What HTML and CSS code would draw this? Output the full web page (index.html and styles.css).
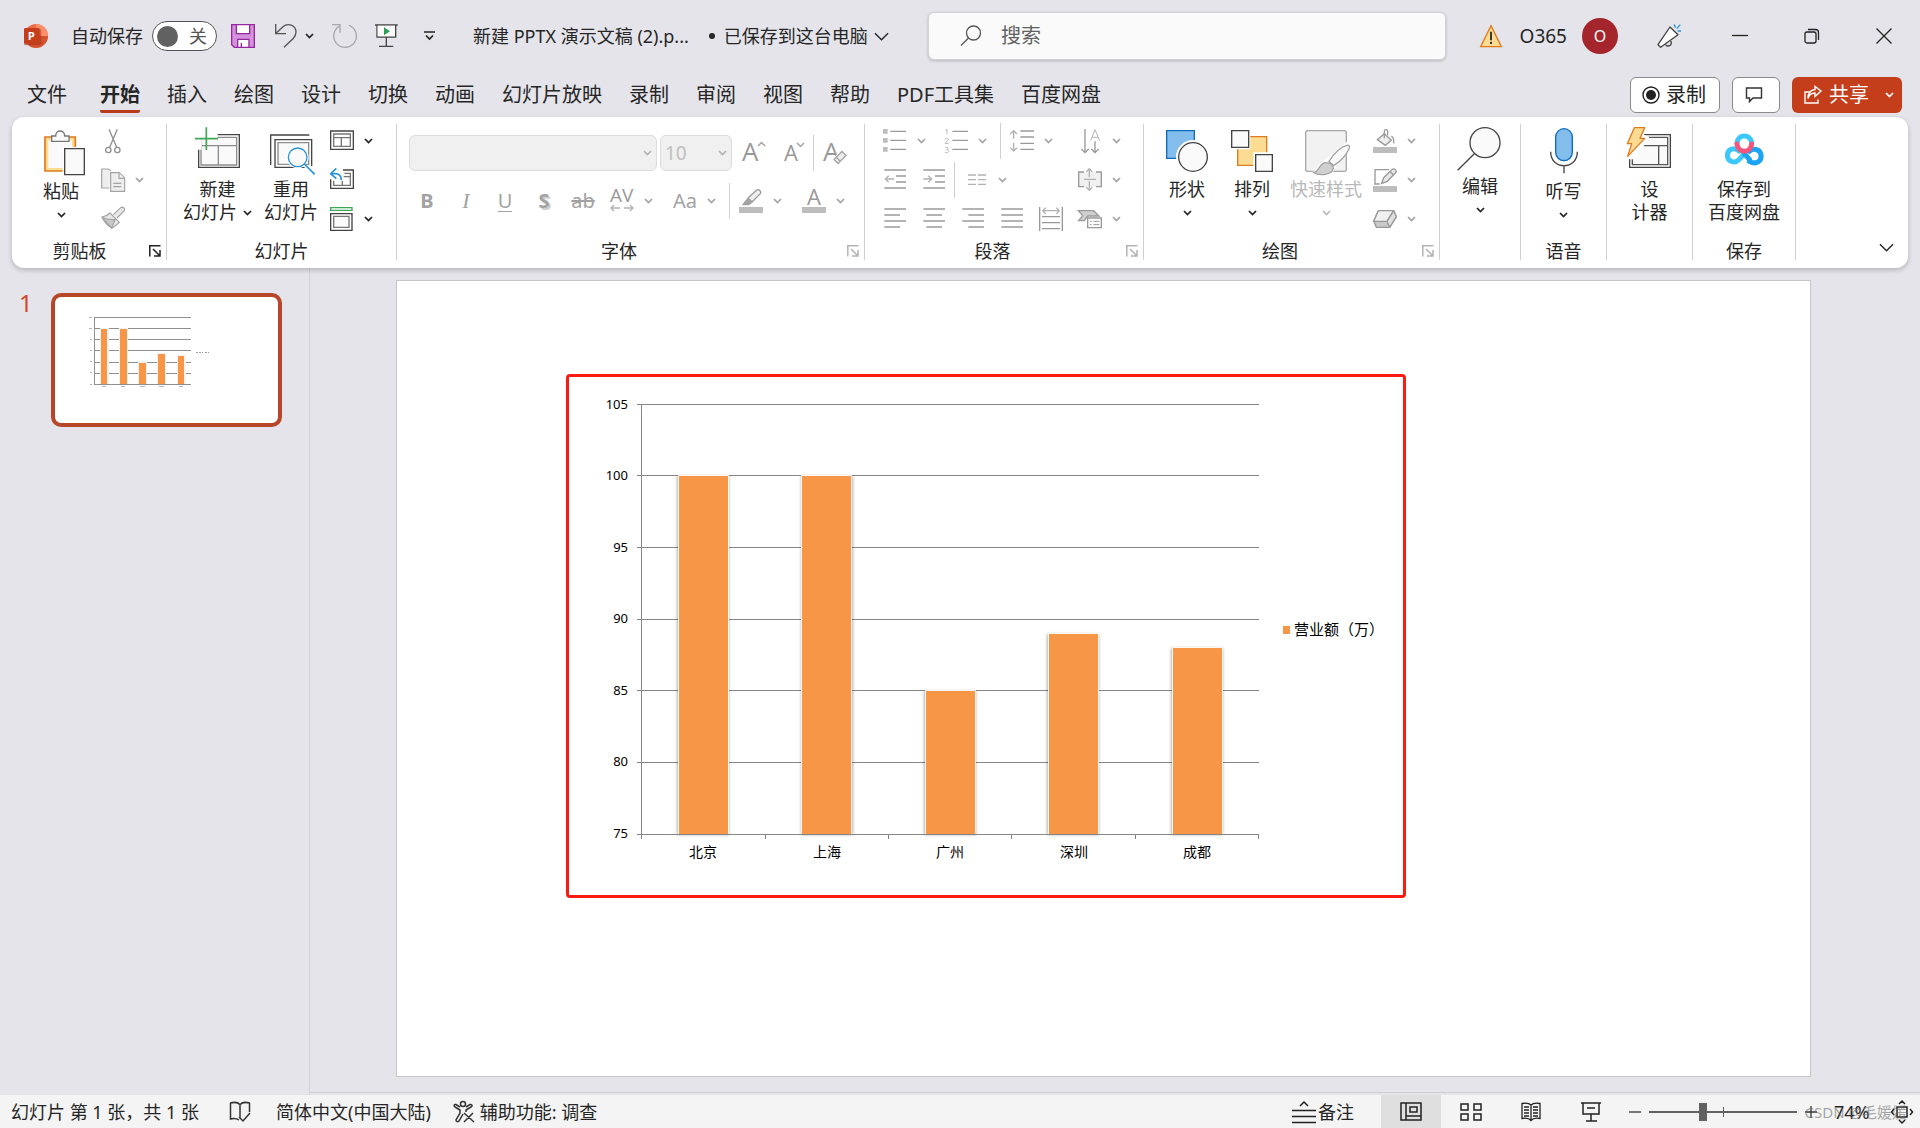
FILE: index.html
```html
<!DOCTYPE html>
<html lang="zh-CN">
<head>
<meta charset="utf-8">
<title>新建 PPTX 演示文稿 (2).pptx</title>
<meta name="viewport" content="width=device-width, initial-scale=1">
<link rel="stylesheet" href="styles.css">
</head>
<body>
<svg class="sprite" aria-hidden="true">
  <symbol id="chev" viewBox="0 0 9 6"><path d="M1 1l3.500 3.500L8 1" fill="none" stroke="currentColor" stroke-width="1.700"/></symbol>
  <symbol id="chev-wide" viewBox="0 0 16 9"><path d="M1 1l7 7 7-7" fill="none" stroke="currentColor" stroke-width="1.500"/></symbol>
  <symbol id="launch" viewBox="0 0 12 12"><path d="M.8 11.500V.8H11.500M4 4l6.500 6.500M11 5v6H5" fill="none" stroke="currentColor" stroke-width="1.500"/></symbol>
</svg>

<header class="titlebar">
  <div class="title-left">
    <svg class="logo" width="24" height="24" viewBox="72 72 72 72" aria-label="PowerPoint" role="img">
      <circle cx="108" cy="108" r="36" fill="#ed6c47"/>
      <path d="M108 72a36 36 0 0 1 36 36h-36z" fill="#ff8f6b"/>
      <path d="M144 108a36 36 0 0 1-68 16l32-16z" fill="#d35230"/>
      <rect x="72" y="88" width="52" height="48" rx="4" fill="#9c2f14" opacity=".5"/>
      <rect x="72" y="84" width="47" height="47" rx="4" fill="#c43e1c"/>
      <text x="83" y="120" class="logo-letter">P</text>
    </svg>
    <label class="autosave" for="autosave">自动保存</label>
    <label class="toggle"><input type="checkbox" id="autosave" role="switch"><span>关</span></label>
    <div class="quick">
      <button type="button" class="tool" aria-label="保存"><svg width="24" height="24" viewBox="693 72 72 72"><path d="M695 74h68v68h-60l-8-8z" fill="#d592dc" stroke="#9527a3" stroke-width="4"/><path d="M709 74v27h40V74zM713 142v-24h34v24z" fill="#fff" stroke="#9527a3" stroke-width="4"/><path d="M724 129v13" stroke="#9527a3" stroke-width="4"/></svg></button>
      <button type="button" class="tool undo" aria-label="撤消"><svg width="24" height="24" viewBox="819 72 72 72"><path d="M827 72v29h31M828 100l21-20c14-12 39-6 39 17 0 8-3 13-9 19l-27 26" fill="none" stroke="#555" stroke-width="4"/></svg><svg class="chev dark"><use href="#chev"/></svg></button>
      <button type="button" class="tool" aria-label="恢复"><svg width="24" height="24" viewBox="993 72 72 72"><path d="M993 74h24v24M1016 78a34 34 0 1 0 28-2" fill="none" stroke="#a8a8ac" stroke-width="4"/></svg></button>
      <button type="button" class="tool" aria-label="从头开始"><svg width="24" height="24" viewBox="1119 70 72 72"><path d="M1122 73h68M1128 75v34h56V75M1156 110v27M1134 137h43" fill="none" stroke="#444" stroke-width="4"/><rect x="1130" y="75" width="52" height="32" fill="#fafafa"/><path d="M1149 80l18 12-18 12z" fill="#2f9e58"/></svg></button>
      <button type="button" class="tool customize" aria-label="自定义快速访问工具栏"><svg width="12" height="10" viewBox="0 0 12 10"><path d="M0 1h11M2 4.500l3.500 3.500L9 4.500" fill="none" stroke="#222" stroke-width="1.700"/></svg></button>
    </div>
    <div class="doc-title">
      <span>新建 PPTX 演示文稿 (2).p...</span>
      <i class="dot"></i>
      <button type="button" class="saved">已保存到这台电脑<svg class="chev-wide"><use href="#chev-wide"/></svg></button>
    </div>
  </div>
  <label class="search">
    <svg width="24" height="24" viewBox="0 0 24 24"><circle cx="14.500" cy="9" r="7" fill="none" stroke="#555" stroke-width="1.300"/><path d="M9.500 14L2 21.500" stroke="#555" stroke-width="1.300"/></svg>
    <input type="search" placeholder="搜索" aria-label="搜索">
  </label>
  <div class="title-right">
    <svg width="24" height="24" viewBox="118 71 72 72"><path d="M154 76l31 63h-62z" fill="#fbdc92" stroke="#e07a1c" stroke-width="4"/><path d="M154 94v26M154 124v7" stroke="#3a3a3a" stroke-width="6"/></svg>
    <span class="user">O365</span>
    <span class="avatar">O</span>
    <div class="window-buttons">
      <button type="button" aria-label="新增功能"><svg width="24" height="24" viewBox="651 71 72 72"><path d="M693 80l24 23-52 38-8-8z" fill="#fff" stroke="#444" stroke-width="4" stroke-linejoin="round"/><path d="M680 132c2 8 15 6 17-2l-1-8" fill="none" stroke="#444" stroke-width="4"/><path d="M706 72l3 10M724 73l-11 12M716 92h10" stroke="#2b93d9" stroke-width="4"/></svg></button>
      <button type="button" aria-label="最小化"><svg width="16" height="16" viewBox="0 0 16 16"><path d="M0 7.500h16" stroke="#222" stroke-width="1.300"/></svg></button>
      <button type="button" aria-label="向下还原"><svg width="16" height="16" viewBox="0 0 16 16" fill="none" stroke="#222" stroke-width="1.300"><rect x="1" y="4" width="11" height="11" rx="2"/><path d="M4 1.500h7.500a3 3 0 0 1 3 3V12"/></svg></button>
      <button type="button" aria-label="关闭"><svg width="16" height="16" viewBox="0 0 16 16"><path d="M.5.5l15 15M15.500.5l-15 15" stroke="#222" stroke-width="1.300"/></svg></button>
    </div>
  </div>
</header>

<nav class="tabs" aria-label="功能区选项卡">
  <a href="#" class="file">文件</a><a href="#" class="active" aria-current="page">开始</a><a href="#">插入</a><a href="#">绘图</a><a href="#">设计</a><a href="#">切换</a><a href="#">动画</a><a href="#">幻灯片放映</a><a href="#">录制</a><a href="#">审阅</a><a href="#">视图</a><a href="#">帮助</a><a href="#">PDF工具集</a><a href="#">百度网盘</a>
  <div class="tab-actions">
    <button type="button" class="outlined"><svg width="18" height="18" viewBox="0 0 18 18"><circle cx="9" cy="9" r="8" fill="none" stroke="#222" stroke-width="1.400"/><circle cx="9" cy="9" r="5" fill="#222"/></svg>录制</button>
    <button type="button" class="outlined comment" aria-label="批注"><svg width="18" height="18" viewBox="0 0 18 18"><path d="M1.500 2h15v10H8l-3.500 3.500V12h-3z" fill="none" stroke="#333" stroke-width="1.400"/></svg></button>
    <button type="button" class="share"><svg width="18" height="18" viewBox="0 0 18 18" fill="none" stroke="#fff" stroke-width="1.400"><path d="M5 6H1v11h13v-3.500"/><path d="M4 12.500c1-4 3.500-5.500 7-5.500v3.500l6-5.500-6-4.500v3C6.500 4 4 7.500 4 12.500z"/></svg>共享<svg class="chev"><use href="#chev"/></svg></button>
  </div>
</nav>

<section class="ribbon" aria-label="开始">
  <div class="group g-clip">
    <div class="body">
      <button type="button" class="big"><svg width="50" height="50" viewBox="108 51 150 150"><path d="M135 81h91v102h-91z" fill="#fbdc92" stroke="#e07a1c" stroke-width="5"/><path d="M145 91h71v83h-71z" fill="#fafafa"/><path d="M155 94V78h12c0-20 27-20 27 0h13v16z" fill="#fafafa" stroke="#777" stroke-width="4"/><path d="M188 111h70v88h-70z" fill="#fff"/><path d="M194 116h59v78h-59z" fill="#fafafa" stroke="#444" stroke-width="4"/></svg><span>粘贴</span><svg class="chev dark"><use href="#chev"/></svg></button>
      <div class="stack">
        <div class="row"><button type="button" class="tool" disabled aria-label="剪切"><svg width="24" height="24" viewBox="303 57 72 72" fill="none" stroke="#8f8f8f" stroke-width="4"><path d="M327 58l23 54M352 58l-23 54"/><circle cx="325" cy="120" r="8"/><circle cx="352" cy="120" r="8"/></svg></button></div>
        <div class="row"><button type="button" class="tool split" disabled aria-label="复制"><svg width="24" height="24" viewBox="303 174 72 72" fill="#eee" stroke="#a3a3a3" stroke-width="3.500"><path d="M328 234h-23v-57h20l8 5"/><path d="M332 188h26l16 16v40h-42z"/><path d="M357 189v16h16M340 220h24M340 230h24"/></svg><svg class="chev"><use href="#chev"/></svg></button></div>
        <div class="row"><button type="button" class="tool" disabled aria-label="格式刷"><svg width="24" height="24" viewBox="303 291 72 72" fill="#e8e8e8" stroke="#a3a3a3" stroke-width="3.500"><path d="M340 314l22-21c7-4 14 2 11 9l-22 22"/><path d="M330 309l28 28-22 18c-16-10-24-20-30-34 10-1 16-4 24-12z"/><path d="M306 322c10 5 26 8 40 6l-11 26z" fill="#c8c8c8"/></svg></button></div>
      </div>
    </div>
    <div class="foot"><span>剪贴板</span><button type="button" class="launch dark" aria-label="剪贴板选项"><svg><use href="#launch"/></svg></button></div>
  </div>

  <div class="group g-slides">
    <div class="body">
      <button type="button" class="big"><svg width="48" height="48" viewBox="579 51 144 144"><path d="M593 74h122v98H593z" fill="#fff" stroke="#444" stroke-width="4"/><path d="M600 82h107v83H600zM600 107h107M652 107v58" fill="#fafafa" stroke="#8c8c8c" stroke-width="4"/><path d="M582 50h68v36h-48v33h-20z" fill="#fff"/><path d="M616 52v68M582 86h69" stroke="#3fa757" stroke-width="5"/></svg><span>新建</span><span class="line">幻灯片<svg class="chev dark"><use href="#chev"/></svg></span></button>
      <button type="button" class="big"><svg width="48" height="48" viewBox="801 51 144 144"><path d="M812 165V75h116" fill="none" stroke="#444" stroke-width="4"/><path d="M825 89h110v83H825z" fill="#fff" stroke="#444" stroke-width="4"/><path d="M834 98h92v65h-92z" fill="#fafafa" stroke="#8c8c8c" stroke-width="4"/><path d="M908 168l40 0 0 30z" fill="#fff"/><circle cx="893" cy="142" r="33" fill="#fff"/><circle cx="893" cy="142" r="28" fill="#fafafa" stroke="#2b93d9" stroke-width="4"/><path d="M913 162l31 31" stroke="#2b93d9" stroke-width="5"/></svg><span>重用</span><span>幻灯片</span></button>
      <div class="stack">
        <div class="row"><button type="button" class="tool split dark" aria-label="版式"><svg width="24" height="24" viewBox="993 57 72 72"><path d="M995 63h68v55h-68z" fill="#fff" stroke="#444" stroke-width="4"/><path d="M1004 72h50v37h-50zM1004 83h50M1027 83v26" fill="none" stroke="#777" stroke-width="4"/></svg><svg class="chev"><use href="#chev"/></svg></button></div>
        <div class="row"><button type="button" class="tool" aria-label="重置"><svg width="24" height="24" viewBox="993 174 72 72"><path d="M1032 180h31v55h-68v-27" fill="none" stroke="#444" stroke-width="4"/><path d="M1036 190h18v36h-50v-14M1034 200h20M1030 213v13" fill="none" stroke="#777" stroke-width="4"/><path d="M1012 175l-17 16 17 15M995 191h13c14 0 19 8 19 20" fill="none" stroke="#2b93d9" stroke-width="5"/></svg></button></div>
        <div class="row"><button type="button" class="tool split dark" aria-label="节"><svg width="24" height="24" viewBox="993 291 72 72"><path d="M995 293h64v8h-64z" fill="#fff" stroke="#3fa757" stroke-width="4"/><path d="M995 311h64v50h-64z" fill="#fff" stroke="#444" stroke-width="4"/><path d="M1004 319h46v33h-46z" fill="#fafafa" stroke="#777" stroke-width="4"/></svg><svg class="chev"><use href="#chev"/></svg></button></div>
      </div>
    </div>
    <div class="foot"><span>幻灯片</span></div>
  </div>

  <div class="group g-font">
    <div class="body fonts">
      <div class="row combos">
        <div class="combo family"><select disabled aria-label="字体"><option></option></select><svg class="chev"><use href="#chev"/></svg></div>
        <div class="combo size"><select disabled aria-label="字号"><option>10</option></select><svg class="chev"><use href="#chev"/></svg></div>
        <button type="button" class="tool grow" disabled aria-label="增大字号"><svg width="24" height="24" viewBox="0 0 24 24"><text x="0" y="20" class="glyph g26">A</text><path d="M16 5l3.500-3.500L23 5" fill="none" stroke="#a3a3a3" stroke-width="1.500"/></svg></button>
        <button type="button" class="tool" disabled aria-label="减小字号"><svg width="24" height="24" viewBox="0 0 24 24"><text x="3" y="20" class="glyph g22">A</text><path d="M16 2l3.500 3.500L23 2" fill="none" stroke="#a3a3a3" stroke-width="1.500"/></svg></button>
        <i class="sep"></i>
        <button type="button" class="tool" disabled aria-label="清除所有格式"><svg width="24" height="24" viewBox="0 0 24 24"><text x="0" y="20" class="glyph g26">A</text><path d="M9 19L18 9l6 5-9 10z" fill="#fff"/><path d="M11 18.500l8-8 4 4-8 8zM13 16l4.500 4.500" fill="#eee" stroke="#a3a3a3" stroke-width="1.300"/></svg></button>
      </div>
      <div class="row styles">
        <button type="button" class="tool letter" disabled aria-label="加粗"><b>B</b></button>
        <button type="button" class="tool letter" disabled aria-label="倾斜"><i class="italic">I</i></button>
        <button type="button" class="tool letter" disabled aria-label="下划线"><span class="under">U</span></button>
        <button type="button" class="tool letter" disabled aria-label="文字阴影"><span class="shadow">S</span></button>
        <button type="button" class="tool letter" disabled aria-label="删除线"><span class="strike">ab</span></button>
        <button type="button" class="tool split" disabled aria-label="字符间距"><svg width="24" height="24" viewBox="0 0 24 24"><text x="0" y="13" class="glyph g19">AV</text><path d="M10 19H1M4 16l-3 3 3 3M14 19h9M20 16l3 3-3 3" fill="none" stroke="#b3b3b3" stroke-width="1.400"/></svg><svg class="chev"><use href="#chev"/></svg></button>
        <button type="button" class="tool split letter" disabled aria-label="更改大小写"><span class="case">Aa</span><svg class="chev"><use href="#chev"/></svg></button>
        <i class="sep"></i>
        <button type="button" class="tool split" disabled aria-label="文本突出显示颜色"><svg width="24" height="24" viewBox="1050 237 72 72"><path d="M1050 291h72v18h-72z" fill="#bdbdbd"/><path d="M1077 264l26-24c7-4 15 4 11 11l-25 25z" fill="#eee" stroke="#999" stroke-width="4"/><path d="M1058 286l17-22 15 14-10 8z" fill="#a3a3a3"/></svg><svg class="chev"><use href="#chev"/></svg></button>
        <button type="button" class="tool split" disabled aria-label="字体颜色"><svg width="24" height="24" viewBox="0 0 24 24"><text x="5" y="16" class="glyph g22">A</text><path d="M0 18h24v6H0z" fill="#bdbdbd"/></svg><svg class="chev"><use href="#chev"/></svg></button>
      </div>
    </div>
    <div class="foot"><span>字体</span><button type="button" class="launch" disabled aria-label="字体选项"><svg><use href="#launch"/></svg></button></div>
  </div>

  <div class="group g-para">
    <div class="body">
      <div class="stack wide">
        <div class="row">
          <button type="button" class="tool split" disabled aria-label="项目符号"><svg width="24" height="24" viewBox="69 57 72 72"><path d="M69 57h14v14H69zM69 84h14v14H69zM69 111h14v14H69z" fill="#bdbdbd"/><path d="M91 64h47M91 91h47M91 118h47" stroke="#9a9a9a" stroke-width="4"/></svg><svg class="chev"><use href="#chev"/></svg></button>
          <button type="button" class="tool split" disabled aria-label="编号"><svg width="24" height="24" viewBox="249 57 72 72"><path d="M253 61l5-3v15M252 88c2-5 11-4 10 1-1 4-7 7-10 11h11M252 113c5-4 12 0 9 4l-4 2c9 1 7 9 0 9l-5-1" fill="none" stroke="#b0b0b0" stroke-width="2.500"/><path d="M274 64h47M274 91h47M274 118h47" stroke="#9a9a9a" stroke-width="4"/></svg><svg class="chev"><use href="#chev"/></svg></button>
          <i class="sep"></i>
          <button type="button" class="tool split" disabled aria-label="行距"><svg width="24" height="24" viewBox="447 57 72 72" fill="none" stroke="#9a9a9a" stroke-width="4"><path d="M478 63h41M478 81h41M478 100h41M478 118h41"/><path d="M458 86V62M448 72l10-10 10 10M458 98v24M448 113l10 10 10-10" stroke="#b3b3b3"/></svg><svg class="chev"><use href="#chev"/></svg></button>
        </div>
        <div class="row">
          <button type="button" class="tool" disabled aria-label="减少缩进"><svg width="24" height="24" viewBox="69 174 72 72" fill="none" stroke="#9a9a9a" stroke-width="4"><path d="M73 180h65M108 198h30M108 216h30M73 234h65"/><path d="M102 207H76M86 197l-10 10 10 10" stroke="#b3b3b3"/></svg></button>
          <button type="button" class="tool" disabled aria-label="增加缩进"><svg width="24" height="24" viewBox="186 174 72 72" fill="none" stroke="#9a9a9a" stroke-width="4"><path d="M190 180h65M225 198h30M225 216h30M190 234h65"/><path d="M190 207h25M205 197l10 10-10 10" stroke="#b3b3b3"/></svg></button>
          <i class="sep"></i>
          <button type="button" class="tool split" disabled aria-label="分栏"><svg width="24" height="24" viewBox="312 174 72 72"><path d="M324 195h24M354 195h24M324 209h24M354 209h24M324 223h24M354 223h24" stroke="#b3b3b3" stroke-width="4"/></svg><svg class="chev"><use href="#chev"/></svg></button>
        </div>
        <div class="row">
          <button type="button" class="tool" disabled aria-label="左对齐"><svg width="24" height="24" viewBox="69 291 72 72"><path d="M73 297h65M73 315h47M73 333h65M73 351h47" stroke="#9a9a9a" stroke-width="4"/></svg></button>
          <button type="button" class="tool" disabled aria-label="居中"><svg width="24" height="24" viewBox="69 291 72 72"><path d="M73 297h65M82 315h47M73 333h65M82 351h47" stroke="#9a9a9a" stroke-width="4"/></svg></button>
          <button type="button" class="tool" disabled aria-label="右对齐"><svg width="24" height="24" viewBox="69 291 72 72"><path d="M73 297h65M91 315h47M73 333h65M91 351h47" stroke="#9a9a9a" stroke-width="4"/></svg></button>
          <button type="button" class="tool" disabled aria-label="两端对齐"><svg width="24" height="24" viewBox="69 291 72 72"><path d="M73 297h65M73 315h65M73 333h65M73 351h65" stroke="#9a9a9a" stroke-width="4"/></svg></button>
          <button type="button" class="tool" disabled aria-label="分散对齐"><svg width="24" height="24" viewBox="537 291 72 72" fill="none" stroke="#9a9a9a" stroke-width="4"><path d="M539 291v72M607 291v72M546 320h54M546 338h54M546 356h54"/><path d="M548 302h50M557 293l-9 9 9 9M589 293l9 9-9 9" stroke="#b3b3b3"/></svg></button>
        </div>
      </div>
      <div class="stack">
        <div class="row"><button type="button" class="tool split" disabled aria-label="文字方向"><svg width="24" height="24" viewBox="654 57 72 72" fill="none" stroke="#999" stroke-width="4"><path d="M675 57v69M664 117l11 11 11-11M705 94v32M694 117l11 11 11-11"/><path d="M692 92l13-33 14 33M697 82h17" stroke="#b3b3b3" stroke-width="3"/></svg><svg class="chev"><use href="#chev"/></svg></button></div>
        <div class="row"><button type="button" class="tool split" disabled aria-label="对齐文本"><svg width="24" height="24" viewBox="654 174 72 72" fill="none" stroke="#999" stroke-width="4"><path d="M656 186h68v44h-68z" fill="#f0f0f0" stroke="none"/><path d="M672 186h-16v44h16M708 186h16v44h-16"/><path d="M672 208h36M688 202v-25M679 185l9-9 9 9M688 214v26M679 232l9 9 9-9" stroke="#b3b3b3"/></svg><svg class="chev"><use href="#chev"/></svg></button></div>
        <div class="row"><button type="button" class="tool split" disabled aria-label="转换为 SmartArt"><svg width="24" height="24" viewBox="654 291 72 72" fill="#d0d0d0" stroke="#999" stroke-width="4"><path d="M655 302h46l16 16h-34l-10 14h-17l12-15z"/><path d="M683 324h41v29h-41z" fill="#fff"/><path d="M690 334h5M700 334h18M690 344h5M700 344h18" stroke-width="3"/></svg><svg class="chev"><use href="#chev"/></svg></button></div>
      </div>
    </div>
    <div class="foot"><span>段落</span><button type="button" class="launch" disabled aria-label="段落选项"><svg><use href="#launch"/></svg></button></div>
  </div>

  <div class="group g-draw">
    <div class="body">
      <button type="button" class="big"><svg width="48" height="48" viewBox="69 51 144 144"><path d="M80 62h83v83H80z" fill="#83bdeb" stroke="#0f6cbd" stroke-width="4"/><circle cx="159" cy="141" r="51" fill="#fff"/><circle cx="159" cy="141" r="43" fill="#fafafa" stroke="#444" stroke-width="4"/></svg><span>形状</span><svg class="chev dark"><use href="#chev"/></svg></button>
      <button type="button" class="big arrange"><svg width="48" height="48" viewBox="264 51 144 144"><path d="M293 80h87v86h-87z" fill="#fbdc92" stroke="#e07a1c" stroke-width="4"/><path d="M270 57h61v61h-61zM340 127h61v61h-61z" fill="#fff"/><path d="M275 62h51v50h-51zM347 134h50v50h-50z" fill="#fafafa" stroke="#444" stroke-width="4"/></svg><span>排列</span><svg class="chev dark"><use href="#chev"/></svg></button>
      <button type="button" class="big quickstyle" disabled><svg width="48" height="48" viewBox="483 51 144 144"><rect x="494" y="62" width="122" height="122" rx="6" fill="#f2f2f2" stroke="#a8a8a8" stroke-width="4"/><path d="M505 186c22 4 25-26 42-33l70-58 18 8-55 75c-5 12-14 20-30 20-18 0-33-3-45-12z" fill="#fff"/><path d="M564 154c14-22 33-43 54-48 6-1 9 3 7 8-8 20-26 40-47 53z" fill="#fafafa" stroke="#a3a3a3" stroke-width="4"/><path d="M518 187c17-1 16-29 37-29 16 0 22 10 22 17-4 19-40 25-59 12z" fill="#d0d0d0" stroke="#a3a3a3" stroke-width="4"/></svg><span>快速样式</span><svg class="chev"><use href="#chev"/></svg></button>
      <div class="stack">
        <div class="row"><button type="button" class="tool split" disabled aria-label="形状填充"><svg width="24" height="24" viewBox="702 57 72 72" fill="none" stroke="#999" stroke-width="4"><path d="M702 111h72v18h-72z" fill="#bdbdbd" stroke="none"/><path d="M736 71l21 20-18 15-24-17z" fill="#eee"/><path d="M736 85V64c0-7 10-7 10 0v12M757 78c7 5 8 12 7 22"/></svg><svg class="chev"><use href="#chev"/></svg></button></div>
        <div class="row"><button type="button" class="tool split" disabled aria-label="形状轮廓"><svg width="24" height="24" viewBox="702 174 72 72" fill="none" stroke="#999" stroke-width="4"><path d="M702 228h72v18h-72z" fill="#bdbdbd" stroke="none"/><path d="M750 179h-42v43h14"/><path d="M728 220l6-17 26-25c6-4 14 4 11 9l-26 27z" fill="#e8e8e8"/><path d="M753 185l11 10"/></svg><svg class="chev"><use href="#chev"/></svg></button></div>
        <div class="row"><button type="button" class="tool split" disabled aria-label="形状效果"><svg width="24" height="24" viewBox="702 291 72 72" fill="#c8c8c8" stroke="#999" stroke-width="4" stroke-linejoin="round"><path d="M718 302h46l8 18-20 32h-40l-8-18z"/><path d="M718 302h46l-20 32h-40z" fill="#f0f0f0"/><path d="M744 334l8 18 20-32-8-18z" fill="#e0e0e0"/></svg><svg class="chev"><use href="#chev"/></svg></button></div>
      </div>
    </div>
    <div class="foot"><span>绘图</span><button type="button" class="launch" disabled aria-label="绘图选项"><svg><use href="#launch"/></svg></button></div>
  </div>

  <div class="group g-edit">
    <div class="body"><button type="button" class="big"><svg width="48" height="45" viewBox="948 51 144 135"><circle cx="1035" cy="98" r="45" fill="#fafafa" stroke="#444" stroke-width="4"/><path d="M1003 131l-50 50" stroke="#444" stroke-width="4"/></svg><span>编辑</span><svg class="chev dark"><use href="#chev"/></svg></button></div>
    <div class="foot"></div>
  </div>
  <div class="group g-voice">
    <div class="body"><button type="button" class="big"><svg width="48" height="50" viewBox="120 51 144 150"><rect x="167" y="56" width="50" height="96" rx="25" fill="#83bdeb" stroke="#0f6cbd" stroke-width="4"/><path d="M152 125c0 56 80 56 80 0M192 167v23" fill="none" stroke="#444" stroke-width="4"/></svg><span>听写</span><svg class="chev dark"><use href="#chev"/></svg></button></div>
    <div class="foot"><span>语音</span></div>
  </div>
  <div class="group g-voice">
    <div class="body"><button type="button" class="big"><svg width="48" height="48" viewBox="378 51 144 144"><path d="M389 74h122v98H389z" fill="#fff" stroke="#444" stroke-width="4"/><path d="M397 82h106v82H397zM397 107h106M476 107v57" fill="#fafafa" stroke="#555" stroke-width="4"/><path d="M372 46h72l-12 28 16 8-42 66h-34z" fill="#fff"/><path d="M403 53h31l-14 32h14l-51 54 12-38h-13z" fill="#fbdc92" stroke="#e07a1c" stroke-width="4" stroke-linejoin="round"/></svg><span>设</span><span>计器</span></button></div>
    <div class="foot"></div>
  </div>
  <div class="group g-baidu">
    <div class="body"><button type="button" class="big"><svg width="48" height="48" viewBox="660 51 144 144" fill="none" stroke-width="15" stroke-linecap="round"><path d="M748 154c22 12 38-2 35-20-4-18-24-20-35-10" stroke="#1ba4f5"/><path d="M733 131l-16 18c-12 13-35 6-35-13s22-26 35-13" stroke="#3cc8fa"/><path d="M733 131l16 18" stroke="#1ba4f5"/><path d="M711 99c3-28 41-28 44 0" stroke="#3cc8fa"/><path d="M711 102c3 29 41 29 44 0" stroke="#f5557c"/></svg><span>保存到</span><span>百度网盘</span></button></div>
    <div class="foot"><span>保存</span></div>
  </div>
  <button type="button" class="collapse" aria-label="折叠功能区"><svg class="chev-wide"><use href="#chev-wide"/></svg></button>
</section>

<main class="workspace">
  <aside class="thumbs" aria-label="幻灯片缩略图">
    <span class="num">1</span>
    <button type="button" class="thumb" aria-label="幻灯片 1">
      <svg viewBox="0 0 223 126">
        <path d="M39 20.500h97M39 31.500h97M39 42.500h97M39 53.500h97M39 65.500h97M39 76.500h97" stroke="#8f8f8f"/>
        <path d="M45 31h9v57h-9zM64 31h9v57h-9zM83 64h9v24h-9zM102 56h9v32h-9zM122 58h9v30h-9z" fill="#f1f1f1"/>
        <path d="M46 32h6v55h-6zM65 32h7v55h-7zM84 66h7v21h-7zM103 57h7v30h-7zM123 59h6v28h-6z" fill="#f79646"/>
        <path d="M39.500 20v68M39 87.500h97" stroke="#8f8f8f" fill="none"/>
        <path d="M34 20.500h3M34 31.500h3M35 42.500h2M35 53.500h2M35 64.500h2M35 75.500h2M35 87.500h2M47 89.500h4M66 89.500h4M85 89.500h5M104 89.500h5M124 89.500h4" stroke="#b5b5b5"/>
        <path d="M141 55.500h7M150 55.500h4" stroke="#999" stroke-dasharray="2 1"/>
      </svg>
    </button>
  </aside>
  <div class="stage">
    <div class="slide">
      <div class="chart">
        <svg viewBox="0 0 834 518" role="img" aria-label="营业额（万）柱形图">
          <defs><filter id="soft" x="-20%" y="-5%" width="140%" height="110%"><feGaussianBlur stdDeviation="1.500"/></filter></defs>
          <path d="M68 27.500h622M68 98.500h622M68 170.500h622M68 242.500h622M68 313.500h622M68 385.500h622" stroke="#868686"/>
          <g fill="#000" opacity=".3" filter="url(#soft)"><path d="M108 99h52v359h-52zM232 99h52v359h-52zM355 314h52v144h-52zM478 257h52v201h-52zM602 271h52v187h-52z"/></g>
          <g fill="#f79646" stroke="#fff7ef" stroke-width="1"><path d="M109.500 98.500h50v359h-50zM232.500 98.500h50v359h-50zM356.500 313.500h50v144h-50zM479.500 256.500h50v201h-50zM603.500 270.500h50v187h-50z"/></g>
          <path d="M72.500 27v435M68 457.500h622M196.500 458v4M319.500 458v4M442.500 458v4M566.500 458v4M689.500 458v4" stroke="#868686" fill="none"/>
          <g class="value-axis"><text x="59" y="32">105</text><text x="59" y="103">100</text><text x="59" y="175">95</text><text x="59" y="246">90</text><text x="59" y="318">85</text><text x="59" y="389">80</text><text x="59" y="461">75</text></g>
          <g class="category-axis"><text x="134" y="480">北京</text><text x="258" y="480">上海</text><text x="381" y="480">广州</text><text x="505" y="480">深圳</text><text x="628" y="480">成都</text></g>
          <rect x="714" y="249" width="7" height="8" fill="#f79646"/>
          <text class="legend" x="725" y="258">营业额（万）</text>
        </svg>
      </div>
    </div>
  </div>
</main>

<footer class="status">
  <span class="count">幻灯片 第 1 张，共 1 张</span>
  <button type="button" aria-label="拼写检查"><svg width="22" height="24" viewBox="0 0 22 24"><path d="M11 4.500C9 2.500 5 2 1.500 3v16c3-1 7 0 8.500 1M11 4.500c2-2 6-2.500 9.500-1.500v9M11 4.500V18M10 17l4 4 7-8" fill="none" stroke="#333" stroke-width="1.500"/></svg></button>
  <button type="button" class="lang">简体中文(中国大陆)</button>
  <button type="button" class="a11y"><svg width="22" height="24" viewBox="0 0 22 24" fill="none" stroke="#333" stroke-width="1.500"><circle cx="10" cy="4" r="2.500"/><path d="M7 7L3 4.500C1 4 .5 6 2 7l5 3v3L3 20c0 2 2 2 3 1l4-7M13 7l4-2.500c2-.5 3 1.500 1 2.500l-5 3v2M11 13l10 9M20 13l-9 9"/></svg>辅助功能: 调查</button>
  <div class="status-right">
    <button type="button" class="notes"><svg width="24" height="24" viewBox="0 0 24 24"><path d="M8 6l4-4 4 4M0 10.500h24M0 16.500h24M0 22.500h24" fill="none" stroke="#222" stroke-width="1.500"/></svg>备注</button>
    <button type="button" class="view on" aria-label="普通视图"><svg width="22" height="20" viewBox="0 0 22 20" fill="none" stroke="#222" stroke-width="1.500"><path d="M1 1h20v17H1zM6 1v17M6 14h15M10 5h7v5h-7z"/></svg></button>
    <button type="button" class="view" aria-label="幻灯片浏览"><svg width="22" height="18" viewBox="0 0 22 18" fill="none" stroke="#222" stroke-width="1.500"><path d="M1 1h7v6H1zM14 1h7v6h-7zM1 11h7v6H1zM14 11h7v6h-7z"/></svg></button>
    <button type="button" class="view" aria-label="阅读视图"><svg width="20" height="20" viewBox="0 0 20 20" fill="none" stroke="#222" stroke-width="1.300"><path d="M10 3C8 1 4 1 1 1.500v15c3-.5 7-.5 9 2 2-2.500 6-2.500 9-2v-15C16 1 12 1 10 3zM10 3v15M3 5h5M3 8h5M3 11h5M3 14h5M12 5h5M12 8h5M12 11h5M12 14h5"/></svg></button>
    <button type="button" class="view" aria-label="幻灯片放映"><svg width="20" height="20" viewBox="0 0 20 20" fill="none" stroke="#222" stroke-width="1.500"><path d="M0 1h20M2 1v11h16V1M6 6h8M10 12v7M5 19h11"/></svg></button>
    <button type="button" class="zoom-btn minus" aria-label="缩小"><svg width="12" height="12" viewBox="0 0 12 12"><path d="M0 6h12" stroke="#333" stroke-width="1.300"/></svg></button>
    <input type="range" min="0" max="100" value="36" aria-label="缩放">
    <button type="button" class="zoom-btn" aria-label="放大"><svg width="12" height="12" viewBox="0 0 12 12"><path d="M0 6h12M6 0v12" stroke="#333" stroke-width="1.300"/></svg></button>
    <span class="percent">74%</span>
    <button type="button" class="fit" aria-label="使幻灯片适应当前窗口"><svg width="22" height="24" viewBox="0 0 22 24" fill="none" stroke="#222" stroke-width="1.500"><path d="M6 7h10v10H6zM8 4l3-3 3 3M8 20l3 3 3-3M3 9l-2.500 3L3 15M19 9l2.500 3-2.500 3"/></svg></button>
    <span class="mark">CSDN @毛媛媛</span>
  </div>
</footer>
</body>
</html>
```
FILE: styles.css
```css
* { box-sizing: border-box; }

body {
  margin: 0;
  min-height: 100vh;
  display: flex;
  flex-direction: column;
  background: #e4e4ea;
  color: #262626;
  font: 18px/24px "Noto Sans", "Noto Sans CJK SC", sans-serif;
}

button {
  margin: 0;
  padding: 0;
  border: 0;
  background: none;
  color: inherit;
  font: inherit;
}

svg { display: block; flex: none; overflow: visible; }
.sprite { position: absolute; width: 0; height: 0; }
.chev { width: 9px; height: 6px; }
.chev-wide { width: 15px; height: 9px; }
.dark { color: #222; }

/* Title bar */
.titlebar {
  display: grid;
  grid-template-columns: 928fr 518fr 474fr;
  align-items: center;
  height: 72px;
}
.title-left { display: flex; align-items: center; padding-left: 24px; white-space: nowrap; }
.logo-letter { font: bold 34px "Open Sans", sans-serif; fill: #fff; }
.autosave { margin-left: 23px; }
.toggle {
  display: flex;
  align-items: center;
  justify-content: space-between;
  width: 65px;
  height: 30px;
  margin-left: 9px;
  padding: 0 9px 0 4px;
  border: 1px solid #555;
  border-radius: 15px;
  background: #fff;
  color: #555;
}
.toggle input {
  appearance: none;
  width: 21px;
  height: 21px;
  margin: 0;
  border-radius: 50%;
  background: #616161;
}
.quick { display: flex; align-items: center; gap: 18px; margin-left: 14px; }
.undo { gap: 8px; }
.quick .customize { width: 12px; margin-left: 8px; }
.doc-title { display: flex; align-items: center; margin-left: 37px; }
.dot { width: 6px; height: 6px; margin: 0 9px 0 20px; border-radius: 50%; background: #262626; }
.saved { display: flex; align-items: center; gap: 6px; }
.search {
  display: flex;
  align-items: center;
  gap: 18px;
  height: 48px;
  padding: 0 30px;
  border: 1px solid #d2d2d6;
  border-radius: 6px;
  background: #fafafa;
  box-shadow: 0 1px 3px rgba(0, 0, 0, .2);
}
.search input {
  flex: 1;
  min-width: 0;
  padding: 0;
  border: 0;
  outline: 0;
  background: none;
  font: inherit;
  font-size: 20px;
}
.search input::placeholder { color: #616161; opacity: 1; }
.title-right { display: flex; align-items: center; justify-content: flex-end; }
.user { margin: 0 15px 0 17px; font-size: 19px; }
.avatar {
  width: 36px;
  margin-right: 14px;
  border-radius: 50%;
  background: #a4262c;
  color: #fff;
  font-size: 16px;
  line-height: 36px;
  text-align: center;
}
.window-buttons { display: flex; }
.window-buttons button { display: grid; place-items: center; width: 72px; height: 48px; }

/* Tabs */
.tabs {
  display: flex;
  align-items: center;
  gap: 27px;
  height: 45px;
  padding: 0 18px 0 27px;
  font-size: 20px;
  white-space: nowrap;
}
.tabs a {
  padding: 6px 0 2px;
  border-bottom: 3px solid transparent;
  color: inherit;
  text-decoration: none;
  line-height: 26px;
}
.tabs .file { margin-right: 6px; }
.tabs .active { border-color: #b83b1d; font-weight: bold; border-radius: 2px; }
.tab-actions { display: flex; gap: 12px; margin-left: auto; }
.tab-actions button { display: flex; align-items: center; height: 36px; border-radius: 6px; }
.outlined { gap: 6px; width: 90px; padding-left: 11px; }
.tab-actions .outlined { border: 1px solid #8a8a8a; background: #fff; }
.tab-actions .comment { width: 48px; padding-left: 12px; }
.share { gap: 7px; width: 110px; padding-left: 12px; background: #c43e1c; color: #fff; }
.share .chev { margin-left: 9px; }

/* Ribbon */
.ribbon {
  position: relative;
  z-index: 1;
  display: flex;
  margin: 0 12px;
  padding: 7px 0 8px;
  border-radius: 12px;
  background: #fff;
  box-shadow: 0 2px 5px rgba(0, 0, 0, .22);
}
.group { display: flex; flex-direction: column; height: 136px; border-right: 1px solid #d0d0d0; }
.body { flex: 1; display: flex; align-items: flex-start; }
.foot { display: flex; height: 18px; padding-right: 5px; line-height: 18px; text-align: center; }
.foot span { flex: 1; }
.launch { width: 18px; padding-left: 6px; }
.launch svg { width: 12px; height: 12px; }
.launch:disabled { color: #b3b3b3; }

.g-clip { width: 155px; }
.g-slides { width: 230px; }
.g-font { width: 468px; }
.g-para { width: 279px; }
.g-draw { width: 296px; }
.g-edit { width: 81px; }
.g-voice { width: 86px; }
.g-baidu { width: 103px; }
.g-clip .body { padding-left: 22px; gap: 13px; }
.g-clip .foot { padding-left: 4px; }
.g-slides .body { padding-left: 16px; gap: 12px; }
.g-para .body { padding-left: 18px; }
.g-draw .body { padding-left: 16px; gap: 11px; }
.g-edit .body, .g-voice .body, .g-baidu .body { justify-content: center; }
.g-slides .foot, .g-voice .foot, .g-baidu .foot { padding: 0; }

.big {
  display: flex;
  flex-direction: column;
  align-items: center;
  min-width: 54px;
  padding-top: 3px;
  line-height: 23px;
}
.big span { white-space: nowrap; }
.big > svg + span { margin-top: 3px; }
.big > .chev { margin-top: 9px; }
.big .line { display: flex; align-items: center; gap: 6px; }
.big:disabled { color: #b8b8b8; }

.stack { display: flex; flex-direction: column; gap: 15px; padding-top: 5px; }
.wide { width: 195px; }
.row { display: flex; align-items: center; height: 24px; }
.tool { display: flex; align-items: center; flex: none; min-width: 12px; height: 24px; }
.tool:disabled { color: #a3a3a3; }
.split { gap: 10px; width: 56px; }
.stack .tool + .tool { margin-left: 15px; }
.stack .split + .split { margin-left: 5px; }
.sep { flex: none; width: 1px; height: 36px; margin-right: 9px; background: #d0d0d0; }
.tool + .sep { margin-left: 8px; }
.split + .sep { margin-left: 0; }

.fonts { flex-direction: column; gap: 12px; padding: 11px 0 0 12px; }
.fonts .row { height: 36px; }
.fonts .tool + .tool { margin-left: 15px; }
.fonts .split + .split { margin-left: 7px; }
.combo {
  display: flex;
  align-items: center;
  height: 36px;
  padding: 0 4px;
  border: 1px solid #dcdcdc;
  border-radius: 6px;
  background: #f0f0f0;
  color: #b3b3b3;
}
.combo select {
  flex: 1;
  min-width: 0;
  padding: 0;
  border: 0;
  appearance: none;
  background: none;
  color: #c0c0c0;
  font: inherit;
  font-size: 19px;
  opacity: 1;
}
.family { width: 248px; margin-right: 3px; }
.size { width: 72px; margin-right: 10px; }
.size select { padding-bottom: 1px; }
.glyph { font-family: "Open Sans", "Noto Sans", sans-serif; fill: #999; }
.g26 { font-size: 26px; }
.g22 { font-size: 22px; }
.g19 { font-size: 19px; }
.styles { padding-left: 6px; }
.letter { justify-content: center; min-width: 24px; font-size: 20px; }
.letter.split { justify-content: flex-start; }
.italic { font-family: "Liberation Serif", serif; font-size: 22px; }
.under { border-bottom: 1px solid #a3a3a3; line-height: 20px; }
.shadow { font-weight: bold; text-shadow: 2px 2px 1px #ccc; }
.strike { text-decoration: line-through; }
.case { width: 24px; }
.collapse { margin: auto 14px 8px auto; }

/* Workspace */
.workspace { flex: 1; display: flex; }
.thumbs {
  display: flex;
  align-items: flex-start;
  flex: none;
  width: 310px;
  padding: 25px 27px 0 19px;
  border-right: 1px solid #d2d2d6;
}
.num { width: 32px; color: #d24726; font-size: 24px; line-height: 20px; }
.thumb {
  flex: none;
  width: 231px;
  height: 134px;
  border: 4px solid #b7472a;
  border-radius: 10px;
  background: #fff;
}
.stage {
  flex: 1;
  display: flex;
  padding: 12px 109px 15px 86px;
  margin-bottom: 2px;
  border-bottom: 1px solid #cfcfd3;
}
.slide { position: relative; flex: 1; border: 1px solid #c6c6c9; background: #fff; }
.chart {
  position: absolute;
  left: 169px;
  top: 93px;
  width: 840px;
  height: 524px;
  border: 3px solid #fb1b12;
  border-radius: 4px;
}
.value-axis { font-size: 13px; text-anchor: end; fill: #000; }
.category-axis { font-size: 14px; text-anchor: middle; fill: #000; }
.legend { font-size: 15px; fill: #000; }

/* Status bar */
.status {
  display: flex;
  align-items: center;
  height: 33px;
  padding-left: 11px;
  background: #f4f4f4;
  white-space: nowrap;
}
.status button { display: flex; align-items: center; flex: none; }
.count { width: 218px; }
.lang { margin-left: 25px; }
.a11y { gap: 5px; margin-left: 22px; }
.status-right { position: relative; display: flex; align-items: center; margin-left: auto; padding-right: 7px; }
.notes { gap: 2px; margin-right: 27px; }
.status .view { justify-content: center; width: 60px; height: 33px; }
.status .on { background: #dfdfdf; }
.status .minus { margin: 0 8px 0 8px; }
.status-right input {
  appearance: none;
  width: 148px;
  height: 22px;
  margin: 0 8px 0 0;
  background:
    linear-gradient(#616161, #616161) center / 1px 10px no-repeat,
    linear-gradient(#616161, #616161) center / 100% 2px no-repeat;
}
.status-right input::-webkit-slider-thumb {
  appearance: none;
  width: 8px;
  height: 18px;
  background: #616161;
}
.percent { width: 57px; padding-left: 17px; }
.fit { margin-left: 17px; }
.mark { position: absolute; right: 13px; color: rgba(110, 110, 110, .6); font-size: 15px; }
```
